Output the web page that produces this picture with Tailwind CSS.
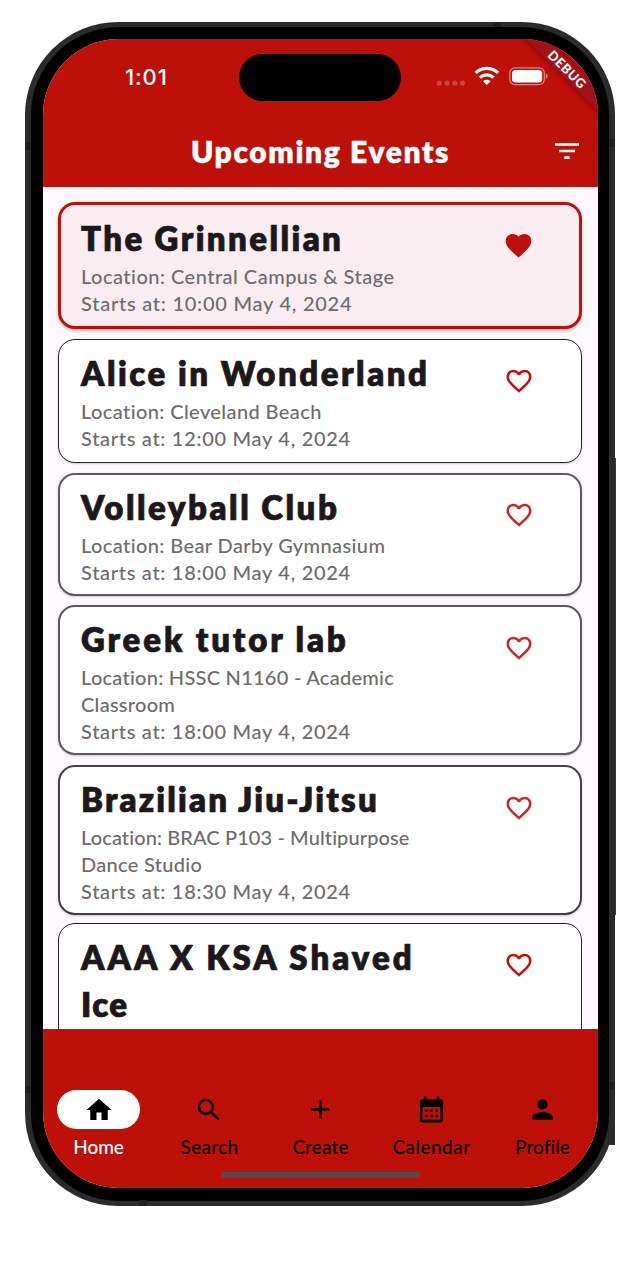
<!DOCTYPE html>
<html lang="en">
<head>
<meta charset="utf-8">
<title>Upcoming Events</title>
<script src="https://cdn.jsdelivr.net/npm/@tailwindcss/browser@4"></script>
</head>
<body class="h-[1280px] overflow-hidden bg-white pt-[22px] pl-[25px] font-['Lato',sans-serif]">
<svg class="hidden">
  <symbol id="heart-line" viewBox="0 0 24 24"><path d="M16.5 3c-1.74 0-3.41.81-4.5 2.09C10.91 3.81 9.24 3 7.5 3 4.42 3 2 5.42 2 8.5c0 3.78 3.4 6.86 8.55 11.54L12 21.35l1.45-1.32C18.6 15.36 22 12.28 22 8.5 22 5.42 19.58 3 16.5 3zm-4.4 15.55l-.1.1-.1-.1C7.14 14.24 4 11.39 4 8.5 4 6.5 5.5 5 7.5 5c1.54 0 3.04.99 3.57 2.36h1.87C13.46 5.99 14.96 5 16.5 5c2 0 3.5 1.5 3.5 3.5 0 2.89-3.14 5.74-7.9 10.05z"/></symbol>
  <symbol id="heart-fill" viewBox="0 0 24 24"><path d="M12 21.35l-1.45-1.32C5.4 15.36 2 12.28 2 8.5 2 5.42 4.42 3 7.5 3c1.74 0 3.41.81 4.5 2.09C13.09 3.81 14.76 3 16.5 3 19.58 3 22 5.42 22 8.5c0 3.78-3.4 6.86-8.55 11.54L12 21.35z"/></symbol>
</svg>

<div class="relative h-[1184px] w-[590px]">
  <!-- side buttons -->
  <div class="absolute top-[436px] right-[-1px] h-[457px] w-[3px] bg-[#3a3a3c]"></div>
  <div class="absolute top-[1066px] right-0 h-[57px] w-[8px] bg-[#2b2b2b]"></div>

  <div class="relative h-full w-full rounded-[93px] bg-[#2b2b2b] px-[6px] py-[5px]">
    <!-- antenna bands -->
    <div class="absolute top-[120px] left-0 h-[8px] w-[6px] bg-[#202020]"></div>
    <div class="absolute top-[117px] right-0 h-[8px] w-[6px] bg-[#202020]"></div>
    <div class="absolute top-[1064px] left-0 h-[7px] w-[6px] bg-[#202020]"></div>
    <div class="absolute top-[1060px] right-0 h-[8px] w-[6px] bg-[#202020]"></div>
    <div class="absolute top-0 left-[468px] h-[5px] w-[8px] bg-[#202020]"></div>
    <div class="absolute bottom-0 left-[114px] h-[6px] w-[8px] bg-[#202020]"></div>

    <div class="h-full rounded-[88px] bg-black px-[12px] pt-[12px] pb-[13px]">
      <div class="relative flex h-[1149px] w-[555px] flex-col overflow-hidden rounded-[76px] bg-[#fdf8fd]">

        <header class="h-[148px] shrink-0 bg-[#bd1009] text-white">
          <div class="flex h-[76px] items-center pl-[82px]">
            <span class="w-[114px] font-['Inter'] text-[22px] font-medium leading-none tracking-[0.9px]">1:01</span>
            <div class="h-[47px] w-[162px] rounded-full bg-black"></div>
            <svg class="ml-[35px] h-[30px] w-[114px]" viewBox="436 62 114 30">
              <g fill="#fff" fill-opacity=".22"><circle cx="439.3" cy="83.2" r="2.6"/><circle cx="447.1" cy="83.2" r="2.6"/><circle cx="454.9" cy="83.2" r="2.6"/><circle cx="462.5" cy="83.2" r="2.6"/></g>
              <g fill="none" stroke="#fff" stroke-width="3.3"><path d="M475.6 72.9a16.2 16.2 0 0 1 22.4 0"/><path d="M480 77.6a10 10 0 0 1 13.6 0"/></g>
              <path fill="#fff" d="M483 81.2a5.6 5.6 0 0 1 7.6 0l-3.8 3.9z"/>
              <rect x="509.8" y="67.8" width="34.5" height="16.9" rx="5.2" fill="none" stroke="#fff" stroke-opacity=".5" stroke-width="1.2"/>
              <rect x="512" y="70" width="30.2" height="12.6" rx="3.6" fill="#fff"/>
              <path d="M545.9 73.4c2.2.8 2.2 4.6 0 5.6z" fill="#fff" fill-opacity=".5"/>
            </svg>
          </div>
          <div class="flex h-[72px] items-center pl-[148px]">
            <h1 class="w-[360px] text-[30px] font-extrabold leading-none tracking-[1.6px] [-webkit-text-stroke:0.4px]">Upcoming Events</h1>
            <svg class="h-8 w-8" viewBox="0 0 24 24" fill="currentColor"><path d="M10 18h4v-2h-4v2zM3 6v2h18V6H3zm3 7h12v-2H6v2z"/></svg>
          </div>
        </header>

        <main class="h-[842px] shrink-0 overflow-hidden pt-[15px] pr-[16px] pl-[15px] text-[20px] font-medium leading-[27px] text-[#6e6b6e]">
          <article class="flex h-[127px] rounded-[17px] border-[3px] border-[#bd1009] bg-[#f9edf2] pt-[10px] pl-[20px] shadow-[0_2px_3px_rgba(0,0,0,0.25)]">
            <div class="w-[422px]">
              <h2 class="mb-[1px] text-[33px] font-extrabold leading-[47px] tracking-[2.4px] text-[#1d181b] [-webkit-text-stroke:0.7px]">The Grinnellian</h2>
              <p class="tracking-[0.48px]">Location: Central Campus &amp; Stage</p>
              <p class="tracking-[0.75px]">Starts at: 10:00 May 4, 2024</p>
            </div>
            <svg class="mt-[15px] h-[31px] w-[31px] fill-[#bd1009]"><use href="#heart-fill"/></svg>
          </article>

          <article class="mt-[10px] flex h-[124px] rounded-[17px] border-[1.5px] border-[#242124] bg-white pt-[10px] pl-[22px] shadow-[0_1px_2px_rgba(0,0,0,0.2)]">
            <div class="w-[422px]">
              <h2 class="mb-[1px] text-[33px] font-extrabold leading-[47px] tracking-[2.5px] text-[#1d181b] [-webkit-text-stroke:0.7px]">Alice in Wonderland</h2>
              <p class="tracking-[0.4px]">Location: Cleveland Beach</p>
              <p class="tracking-[0.7px]">Starts at: 12:00 May 4, 2024</p>
            </div>
            <svg class="mt-[16px] ml-[1px] h-[30px] w-[30px] fill-[#bd1009]"><use href="#heart-line"/></svg>
          </article>

          <article class="mt-[10px] flex h-[123px] rounded-[17px] border-[2px] border-[#5d5a5d] bg-white pt-[9px] pl-[21px] shadow-[0_1px_2px_rgba(0,0,0,0.2)]">
            <div class="w-[422px]">
              <h2 class="mb-[1px] text-[33px] font-extrabold leading-[47px] tracking-[2.5px] text-[#1d181b] [-webkit-text-stroke:0.7px]">Volleyball Club</h2>
              <p class="tracking-[0.4px]">Location: Bear Darby Gymnasium</p>
              <p class="tracking-[0.7px]">Starts at: 18:00 May 4, 2024</p>
            </div>
            <svg class="mt-[16px] ml-[1px] h-[30px] w-[30px] fill-[#c02a26]"><use href="#heart-line"/></svg>
          </article>

          <article class="mt-[9px] flex h-[150px] rounded-[17px] border-[2px] border-[#5d5a5d] bg-white pt-[9px] pl-[21px] shadow-[0_1px_2px_rgba(0,0,0,0.2)]">
            <div class="w-[422px]">
              <h2 class="mb-[1px] text-[33px] font-extrabold leading-[47px] tracking-[2.85px] text-[#1d181b] [-webkit-text-stroke:0.7px]">Greek tutor lab</h2>
              <p class="tracking-[0.26px]">Location: HSSC N1160 - Academic<br>Classroom</p>
              <p class="tracking-[0.7px]">Starts at: 18:00 May 4, 2024</p>
            </div>
            <svg class="mt-[17px] ml-[1px] h-[30px] w-[30px] fill-[#c02a26]"><use href="#heart-line"/></svg>
          </article>

          <article class="mt-[10px] flex h-[150px] rounded-[17px] border-[2px] border-[#454245] bg-white pt-[9px] pl-[21px] shadow-[0_1px_2px_rgba(0,0,0,0.2)]">
            <div class="w-[422px]">
              <h2 class="mb-[1px] text-[33px] font-extrabold leading-[47px] tracking-[2.15px] text-[#1d181b] [-webkit-text-stroke:0.7px]">Brazilian Jiu-Jitsu</h2>
              <p class="tracking-[0.1px]">Location: BRAC P103 - Multipurpose</p>
              <p class="tracking-[0.3px]">Dance Studio</p>
              <p class="tracking-[0.7px]">Starts at: 18:30 May 4, 2024</p>
            </div>
            <svg class="mt-[17px] ml-[1px] h-[30px] w-[30px] fill-[#c02a26]"><use href="#heart-line"/></svg>
          </article>

          <article class="mt-[8px] flex h-[174px] rounded-[17px] border-[1.5px] border-[#242124] bg-white pt-[10px] pl-[22px]">
            <div class="w-[422px]">
              <h2 class="text-[33px] font-extrabold leading-[47px] tracking-[3px] text-[#1d181b] [-webkit-text-stroke:0.7px]">AAA X KSA Shaved<br><span class="tracking-[1.4px]">Ice</span></h2>
            </div>
            <svg class="mt-[16px] ml-[1px] h-[30px] w-[30px] fill-[#bd1009]"><use href="#heart-line"/></svg>
          </article>
        </main>

        <nav class="grid grow grid-cols-5 bg-[#bd1009] pt-[61px] text-[19px] font-medium leading-[24px] text-black">
          <div class="flex flex-col items-center gap-[6px]">
            <div class="flex h-[39px] w-[83px] items-center justify-center rounded-full bg-white"><svg class="h-[30px] w-[30px]" viewBox="0 0 24 24"><path d="M10 20v-6h4v6h5v-8h3L12 3 2 12h3v8z"/></svg></div>
            <span class="tracking-[-0.1px] text-white">Home</span>
          </div>
          <div class="flex flex-col items-center gap-[6px]">
            <div class="flex h-[39px] items-center pr-[2px]"><svg class="h-[30px] w-[30px]" viewBox="0 0 24 24"><path d="M15.5 14h-.79l-.28-.27C15.41 12.59 16 11.11 16 9.5 16 5.91 13.09 3 9.5 3S3 5.91 3 9.5 5.91 16 9.5 16c1.61 0 3.09-.59 4.23-1.57l.27.28v.79l5 4.99L20.49 19l-4.99-5zm-6 0C7.01 14 5 11.99 5 9.5S7.01 5 9.5 5 14 7.01 14 9.5 11.99 14 9.5 14z"/></svg></div>
            <span class="tracking-[0.29px]">Search</span>
          </div>
          <div class="flex flex-col items-center gap-[6px]">
            <div class="flex h-[39px] items-center"><svg class="h-[31px] w-[31px]" viewBox="0 0 24 24"><path d="M19 13h-6v6h-2v-6H5v-2h6V5h2v6h6v2z"/></svg></div>
            <span class="tracking-[0.11px]">Create</span>
          </div>
          <div class="flex flex-col items-center gap-[6px]">
            <div class="flex h-[39px] items-center"><svg class="h-[31px] w-[31px]" viewBox="0 0 24 24"><path d="M19 4h-1V2h-2v2H8V2H6v2H5c-1.11 0-1.99.9-1.99 2L3 20a2 2 0 0 0 2 2h14c1.1 0 2-.9 2-2V6c0-1.1-.9-2-2-2zm0 16H5V10h14v10zM9 14H7v-2h2v2zm4 0h-2v-2h2v2zm4 0h-2v-2h2v2zm-8 4H7v-2h2v2zm4 0h-2v-2h2v2zm4 0h-2v-2h2v2z"/></svg></div>
            <span class="tracking-[0.45px]">Calendar</span>
          </div>
          <div class="flex flex-col items-center gap-[6px]">
            <div class="flex h-[39px] items-center"><svg class="h-[31px] w-[31px]" viewBox="0 0 24 24"><path d="M12 12c2.21 0 4-1.79 4-4s-1.79-4-4-4-4 1.79-4 4 1.79 4 4 4zm0 2c-2.67 0-8 1.34-8 4v2h16v-2c0-2.66-5.33-4-8-4z"/></svg></div>
            <span class="tracking-[0.05px]">Profile</span>
          </div>
        </nav>

        <!-- home indicator -->
        <div class="absolute bottom-[10px] left-[178px] h-[6px] w-[199px] rounded-full bg-[#55484f]"></div>
        <!-- debug ribbon -->
        <div class="absolute top-[22px] right-[-39px] flex h-[16px] w-[140px] rotate-45 items-center justify-center bg-[#a1121a] pl-[1px] text-[13px] font-black leading-none tracking-[0.6px] text-white shadow-[0_0_6px_rgba(80,0,0,0.6)]">DEBUG</div>
      </div>
    </div>
  </div>
</div>
</body>
</html>
